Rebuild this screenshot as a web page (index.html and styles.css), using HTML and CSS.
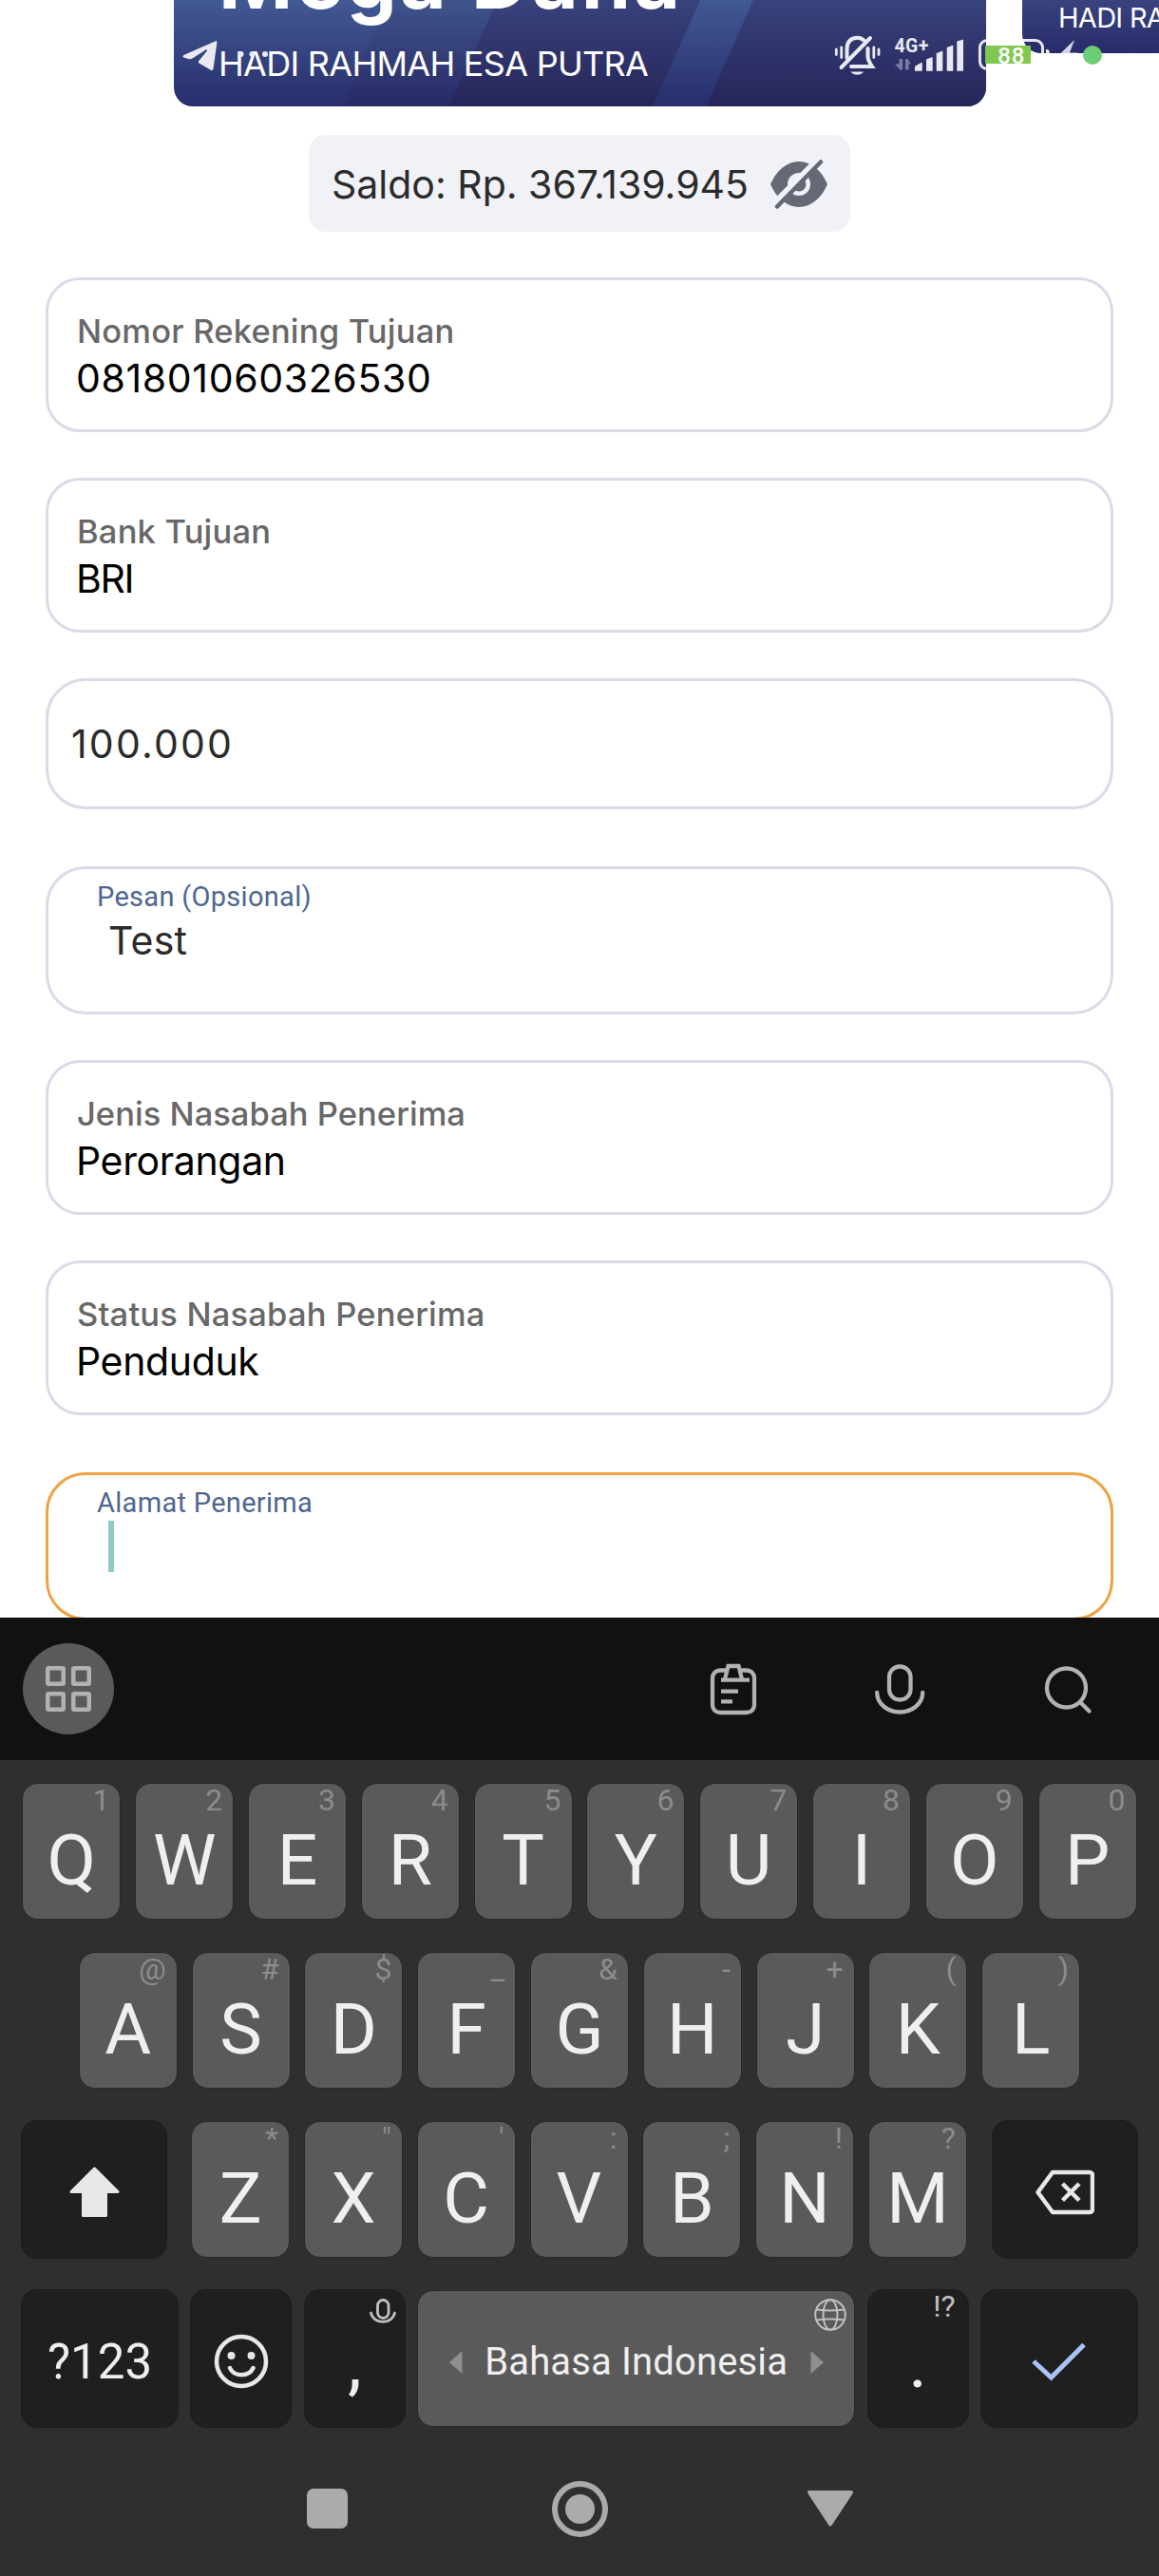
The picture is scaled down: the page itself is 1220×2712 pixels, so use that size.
FILE: index.html
```html
<!DOCTYPE html>
<html lang="id">
<head>
<meta charset="utf-8">
<title>Transfer</title>
<link rel="stylesheet" href="styles.css">
</head>
<body>
<main class="screen">
  <section class="carousel">
    <article class="card">
      <svg class="card-art" viewBox="0 0 855 112" preserveAspectRatio="none">
        <defs>
          <linearGradient id="lit" x1="0" y1="0" x2="0" y2="1"><stop offset="0" stop-color="#425993"/><stop offset="1" stop-color="#272e6c"/></linearGradient>
          <linearGradient id="mid" x1="0" y1="0" x2="0" y2="1"><stop offset="0" stop-color="#40548c"/><stop offset="1" stop-color="#272a66"/></linearGradient>
          <linearGradient id="dim" x1="0" y1="0" x2="0" y2="1"><stop offset="0" stop-color="#38427b"/><stop offset="1" stop-color="#26255a"/></linearGradient>
        </defs>
        <path fill="url(#lit)" d="M0 0H855V112H0z"/>
        <path fill="url(#mid)" d="M225 0H341L289 112H179z"/>
        <path fill="url(#dim)" d="M341 0H554L504 112H289z"/>
        <path fill="url(#dim)" d="M610 0H855V112H560z"/>
      </svg>
      <h1 class="card-title">Mega Dana</h1>
      <p class="card-name">HADI RAHMAH ESA PUTRA</p>
    </article>
    <article class="card card-next">
      <p class="card-name">HADI RAHMAH ESA PUTRA</p>
    </article>
  </section>

  <div class="balance">
    <span class="balance-text">Saldo: Rp. 367.139.945</span>
    <svg class="eye" viewBox="0 0 60 52">
      <path fill="#666875" d="M0 26C6 12 17 2 30 2S54 12 60 26C54 40 43 50 30 50S6 40 0 26z"/>
      <circle cx="30" cy="26" r="12" fill="#f0f2f8"/>
      <circle cx="30" cy="26" r="7.500" fill="#666875"/>
      <path d="M2.800 46.800L50.800 -1.200" stroke="#f0f2f8" stroke-width="6"/>
      <path d="M7 49.500L53 2.500" stroke="#666875" stroke-width="4.500" stroke-linecap="round"/>
    </svg>
  </div>

  <form class="form">
    <div class="field"><span class="label">Nomor Rekening Tujuan</span><span class="value digits">081801060326530</span></div>
    <div class="field"><span class="label">Bank Tujuan</span><span class="value tight">BRI</span></div>
    <div class="field amount"><span class="value">100.000</span></div>
    <div class="field input"><span class="float-label">Pesan (Opsional)</span><span class="value">Test</span></div>
    <div class="field"><span class="label jenis">Jenis Nasabah Penerima</span><span class="value">Perorangan</span></div>
    <div class="field"><span class="label">Status Nasabah Penerima</span><span class="value">Penduduk</span></div>
    <div class="field input focused"><span class="float-label address">Alamat Penerima</span><span class="caret"></span></div>
  </form>
</main>

<section class="keyboard">
  <div class="toolbar">
    <span class="apps"><svg width="48" height="48" viewBox="0 0 48 48" fill="none" stroke="#b2b2b2" stroke-width="4.500"><rect x="2.250" y="2.250" width="16.500" height="16.500" rx="1"/><rect x="29.250" y="2.250" width="16.500" height="16.500" rx="1"/><rect x="2.250" y="29.250" width="16.500" height="16.500" rx="1"/><rect x="29.250" y="29.250" width="16.500" height="16.500" rx="1"/></svg></span>
    <svg class="tool" viewBox="0 0 60 60" fill="none" stroke="#b2b2b2" stroke-width="4.300"><path d="M22 10.500H16a8 8 0 0 0-8 8V47a8 8 0 0 0 8 8H44a8 8 0 0 0 8-8V18.500a8 8 0 0 0-8-8H38"/><path d="M21 20L24.500 6H35.500L39 20"/><path d="M17 20.700H47M17 32.700H35M17 43.300H29"/></svg>
    <svg class="tool" viewBox="0 0 60 60" fill="none" stroke="#b2b2b2" stroke-width="4.300" stroke-linecap="round"><rect x="17" y="6.500" width="22.500" height="35" rx="11"/><path d="M4.200 34a24 20.500 0 0 0 48 0"/></svg>
    <svg class="tool" viewBox="0 0 60 60" fill="none" stroke="#b2b2b2" stroke-width="4.300" stroke-linecap="round"><circle cx="26.500" cy="29" r="20.500"/><path d="M41.500 44.500L50.500 53.500"/></svg>
  </div>

  <div class="keys">
    <div class="row">
      <div class="key"><i>1</i>Q</div><div class="key"><i>2</i>W</div><div class="key"><i>3</i>E</div><div class="key"><i>4</i>R</div><div class="key"><i>5</i>T</div><div class="key"><i>6</i>Y</div><div class="key"><i>7</i>U</div><div class="key"><i>8</i>I</div><div class="key"><i>9</i>O</div><div class="key"><i>0</i>P</div>
    </div>
    <div class="row">
      <div class="key"><i>@</i>A</div><div class="key"><i>#</i>S</div><div class="key"><i>$</i>D</div><div class="key"><i>_</i>F</div><div class="key"><i>&amp;</i>G</div><div class="key"><i>-</i>H</div><div class="key"><i>+</i>J</div><div class="key"><i>(</i>K</div><div class="key"><i>)</i>L</div>
    </div>
    <div class="row">
      <div class="key dark shift"><svg width="53" height="54" viewBox="0 0 53 54"><path d="M26.500 2L51 26.500H38.500V51.500H14.500V26.500H2z" fill="#e8e8e8" stroke="#e8e8e8" stroke-width="3" stroke-linejoin="round"/></svg></div>
      <div class="key"><i>*</i>Z</div><div class="key"><i>"</i>X</div><div class="key"><i>'</i>C</div><div class="key"><i>:</i>V</div><div class="key"><i>;</i>B</div><div class="key"><i>!</i>N</div><div class="key"><i>?</i>M</div>
      <div class="key dark delete"><svg width="62" height="48" viewBox="0 0 62 48" fill="none" stroke="#e8e8e8" stroke-width="4.500" stroke-linejoin="round"><path d="M18 3H57a3 3 0 0 1 3 3V42a3 3 0 0 1-3 3H18L2.500 24z"/><path d="M28.500 15L46 32.500M46 15L28.500 32.500"/></svg></div>
    </div>
    <div class="row bottom">
      <div class="key dark symbols">?123</div>
      <div class="key dark emoji"><svg width="58" height="58" viewBox="0 0 58 58" fill="none" stroke="#e8e8e8" stroke-width="4.500"><circle cx="29" cy="29" r="26"/><path d="M17 36c4 9.500 20 9.500 24.500 0" stroke-linecap="round"/><circle cx="18.500" cy="23" r="4" fill="#e8e8e8" stroke="none"/><circle cx="39.500" cy="23" r="4" fill="#e8e8e8" stroke="none"/></svg></div>
      <div class="key dark"><svg class="mini-mic" viewBox="0 0 28 29" fill="none" stroke="#c0c0c0" stroke-width="2.800" stroke-linecap="round"><rect x="8.500" y="1.500" width="11.500" height="19" rx="5.700"/><path d="M1.500 15a12.700 11.500 0 0 0 25 0"/></svg><span class="punct">,</span></div>
      <div class="key space">
        <svg width="14" height="26" viewBox="0 0 14 26"><path d="M13.500 1V25L0 13z" fill="#8f8f8f"/></svg>
        <span>Bahasa Indonesia</span>
        <svg width="14" height="26" viewBox="0 0 14 26"><path d="M.5 1V25L14 13z" fill="#8f8f8f"/></svg>
        <svg class="globe" viewBox="0 0 34 34" fill="none" stroke="#c0c0c0" stroke-width="2"><circle cx="17" cy="17" r="15.800"/><ellipse cx="17" cy="17" rx="7.500" ry="15.800"/><path d="M2.500 11.500Q17 13.500 31.500 11.500M2.500 22.500Q17 20.500 31.500 22.500"/></svg>
      </div>
      <div class="key dark"><i>!?</i><span class="punct">.</span></div>
      <div class="key dark symbols"><svg width="58" height="42" viewBox="0 0 58 42" fill="none" stroke="#a9c4f8" stroke-width="5"><path d="M2 20L20.500 37L55 2.500"/></svg></div>
    </div>
  </div>

  <nav class="navbar">
    <span class="recent"></span>
    <span class="home"></span>
    <svg width="50" height="40" viewBox="0 0 50 40"><path d="M3 3H47L25 36.500z" fill="#ababab" stroke="#ababab" stroke-width="4" stroke-linejoin="round"/></svg>
  </nav>
</section>

<svg class="statusbar" viewBox="0 0 1220 112">
  <g fill="#e9e9f1">
    <path d="M193.500 58Q211 50 227 43.200Q228.800 42.800 228.400 45L224.500 72.500Q224 75 221.500 73.500L209.500 66.500Q208 65.400 209.300 64L218 53.500Q218.500 51.500 216.500 52.600L202.500 61.500Q200.500 62.600 198.500 62L193.500 60.500Q191.500 59.500 193.500 58z"/>
    <circle cx="253.500" cy="57" r="3"/><circle cx="265.500" cy="57" r="3"/><circle cx="279" cy="57" r="3"/>
    <path d="M963 74.700V70Q967 67 970.700 65.500V74.700zM975 74.700V62.500L981.700 60V74.700zM985.700 74.700V56L992.300 53.500V74.700zM996.700 74.700V50L1003.300 47.500V74.700zM1007.300 74.700V43.500L1014 41.500V74.700z"/>
    <path d="M895.500 75.500H909Q906.500 78.700 902.300 78.700T895.500 75.500z"/>
    <text class="net" x="941.500" y="54.500">4G+</text>
  </g>
  <g fill="none" stroke="#e9e9f1" stroke-width="4" stroke-linecap="round">
    <path d="M891.500 61V51Q892 40 902.500 39.800Q907 39.800 910 43"/>
    <path d="M913.500 51V60Q914 64 918 70H896"/>
    <path d="M885.500 71L916 40"/>
    <path stroke-width="2.800" d="M880.300 52V57.500M885.700 50V60.500M919.800 50V60.500M925 52V57.500"/>
  </g>
  <path d="M950 62V73.500H947.500L942 67.500H946.500V62zM953 73.500V62H955.500L959 67.500H956.500V73.500z" fill="#797ba3"/>
  <rect x="1031.500" y="42.500" width="66" height="30" rx="7.500" fill="none" stroke="#fff" stroke-opacity=".88" stroke-width="3"/>
  <path d="M1101 52H1103Q1105 53 1105 57.500T1103 63H1101z" fill="#fff" fill-opacity=".9"/>
  <path d="M1131 42L1115.500 57H1124L1119 73L1135 55.500H1126z" fill="#fff" fill-opacity=".8"/>
  <rect x="1037" y="48" width="48" height="19" rx="1" fill="#80c850"/>
  <text class="charge" x="1050.300" y="67">88</text>
  <circle cx="1150" cy="58" r="10" fill="#6acf74"/>
</svg>
</body>
</html>
```
FILE: styles.css
```css
* { box-sizing: border-box; }

body {
  margin: 0;
  width: 1220px;
  height: 2712px;
  position: relative;
  overflow: hidden;
  display: flex;
  flex-direction: column;
  background: #fff;
  font-family: Inter, "Noto Sans", sans-serif;
}

h1, p { margin: 0; }
svg { display: block; flex: none; }

.screen {
  height: 1703px;
  overflow: hidden;
}

/* Card carousel, scrolled partly out of view */
.carousel {
  display: flex;
  align-items: flex-start;
  gap: 38px;
  width: 1220px;
  height: 232px;
  margin-top: -120px;
  padding-left: 183px;
  overflow: hidden;
}

.card {
  position: relative;
  flex: none;
  width: 855px;
  height: 232px;
  padding: 59px 0 0 47px;
  border-radius: 20px;
  overflow: hidden;
  color: #fff;
  white-space: nowrap;
}

.card-art {
  position: absolute;
  left: 0;
  bottom: 0;
  width: 855px;
  height: 112px;
}

.card-title {
  position: relative;
  font-size: 84px;
  line-height: 80px;
  font-weight: 700;
  letter-spacing: 3.2px;
}

.card-name {
  position: relative;
  margin-top: 23px;
  font-size: 36px;
  line-height: 50px;
  letter-spacing: -.71px;
}

.card-next {
  height: 176px;
  padding: 119px 0 0 38px;
  background: linear-gradient(#38447f 120px, #272b69);
}

.card-next .card-name {
  margin: 0;
  font-size: 29px;
  line-height: 40px;
}

.balance {
  display: flex;
  align-items: center;
  justify-content: space-between;
  width: 570px;
  height: 102px;
  margin: 30px auto 48px;
  padding: 2px 24px 0;
  border-radius: 18px;
  background: #f0f2f8;
}

.balance-text {
  font-size: 41px;
  line-height: 50px;
  color: #2b2b2b;
}

.eye { width: 60px; height: 52px; }

/* Form fields */
.form {
  display: flex;
  flex-direction: column;
  gap: 48px;
  padding: 0 48px;
}

.field {
  display: flex;
  flex-direction: column;
  flex: none;
  height: 163px;
  padding: 29px 29px 0;
  border: 3px solid #d9dbe8;
  border-radius: 36px;
}

.label {
  margin-left: 1px;
  font-size: 34.5px;
  font-weight: 500;
  line-height: 50px;
  letter-spacing: .2px;
  color: #686868;
}

.label.jenis { letter-spacing: .03px; }

.value {
  margin-top: -1px;
  font-size: 41px;
  line-height: 50px;
  letter-spacing: -.36px;
  color: #000;
}

.value.digits { letter-spacing: .64px; }
.value.tight { letter-spacing: -1.4px; }

.amount {
  height: 138px;
  padding: 0 24px;
  justify-content: center;
  border-radius: 42px;
}

.amount .value {
  margin: 0;
  letter-spacing: 2.19px;
  color: #2b2b2b;
}

.input {
  height: 156px;
  margin-top: 12px;
  padding: 11px 51px 0;
  border-radius: 42px;
}

.float-label {
  font: 29px/36px Roboto, sans-serif;
  letter-spacing: .3px;
  color: #4e6790;
}

.input .value {
  margin: 3px 0 0 12px;
  letter-spacing: .23px;
  color: #2b2b2b;
}

.focused { border-color: #eea343; }

.caret {
  width: 6px;
  height: 54px;
  margin: 1px 0 0 12px;
  background: #90cac4;
}

/* Keyboard */
.keyboard {
  flex: 1;
  display: flex;
  flex-direction: column;
  background: #2f2f2f;
  font-family: Roboto, sans-serif;
}

.toolbar {
  display: flex;
  align-items: center;
  gap: 117px;
  height: 150px;
  padding: 0 64px 0 24px;
  background: #111;
}

.apps {
  display: grid;
  place-items: center;
  width: 96px;
  height: 96px;
  margin-right: auto;
  border-radius: 50%;
  background: #5a5a5a;
}

.tool { width: 60px; height: 60px; }

.keys {
  display: flex;
  flex-direction: column;
  gap: 34px;
  padding: 24px 22px 0;
}

.row {
  display: flex;
  justify-content: center;
  align-items: center;
  gap: 14.8px;
  height: 144px;
}

.key {
  position: relative;
  display: flex;
  justify-content: center;
  flex: none;
  width: 104px;
  height: 144px;
  padding-top: 30px;
  border: 1px solid #282828;
  border-radius: 17px;
  background: #5a5a5a;
  font-size: 75px;
  line-height: 100px;
  color: #efefef;
}

.key i {
  position: absolute;
  top: -1px;
  right: 11px;
  font-style: normal;
  font-size: 32px;
  line-height: 36px;
  color: #8c8c8c;
}

.dark {
  height: 146px;
  border-color: #1c1c1c;
  background: #1f1f1f;
}

.dark i { right: 13px; color: #c0c0c0; }

.shift, .delete { width: 154px; padding: 0; align-items: center; }
.shift { margin-right: 10px; }
.delete { margin-left: 11px; }
.shift svg { margin-top: 5px; }
.delete svg { margin-top: 5px; }

.bottom {
  justify-content: space-between;
  gap: 0;
}

.bottom .key { width: 107px; }

.bottom .symbols {
  width: 166px;
  padding: 7px 0 0;
  align-items: center;
  font-size: 51px;
}

.bottom .emoji { padding: 7px 0 0; align-items: center; }
.emoji svg { margin-top: -2px; }

.bottom .space {
  width: 461px;
  padding: 7px 0 0;
  align-items: center;
  gap: 23.5px;
  font-size: 40px;
  letter-spacing: .15px;
}

.punct { margin-top: -4px; }

.mini-mic {
  position: absolute;
  top: 9px;
  right: 9px;
  width: 28px;
  height: 29px;
}

.globe {
  position: absolute;
  top: 8px;
  right: 8px;
  width: 34px;
  height: 34px;
}

.navbar {
  display: grid;
  grid-template-columns: 43px 1fr 50px;
  align-items: center;
  justify-items: center;
  height: 60px;
  margin-top: 56px;
  padding: 0 321px 0 323px;
}

.recent {
  width: 43px;
  height: 42px;
  border-radius: 7px;
  background: #ababab;
}

.home {
  width: 59px;
  height: 59px;
  padding: 8px;
  margin-left: 5px;
  border: 6px solid #ababab;
  border-radius: 50%;
  background: #ababab content-box;
}

/* System status bar, drawn over the page */
.statusbar {
  position: absolute;
  inset: 0 0 auto 0;
  width: 1220px;
  height: 112px;
}

.net { font: 700 19.5px Roboto, sans-serif; letter-spacing: .4px; }
.charge { font: 500 24px Roboto, sans-serif; letter-spacing: .8px; fill: #fff; }
```
